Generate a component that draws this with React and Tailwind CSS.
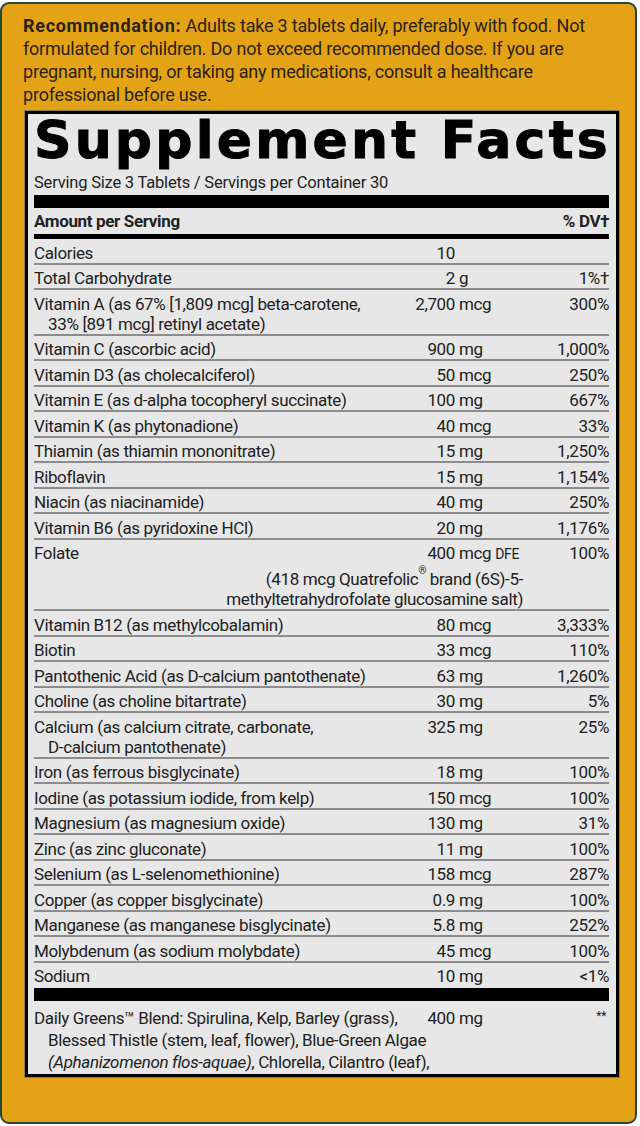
import React from "react";

const rows = [
  { name: ["Calories"], num: "10", unit: "", dv: "" },
  { name: ["Total Carbohydrate"], num: "2", unit: "g", dv: "1%†" },
  { name: ["Vitamin A (as 67% [1,809 mcg] beta-carotene,", "33% [891 mcg] retinyl acetate)"], num: "2,700", unit: "mcg", dv: "300%" },
  { name: ["Vitamin C (ascorbic acid)"], num: "900", unit: "mg", dv: "1,000%" },
  { name: ["Vitamin D3 (as cholecalciferol)"], num: "50", unit: "mcg", dv: "250%" },
  { name: ["Vitamin E (as d-alpha tocopheryl succinate)"], num: "100", unit: "mg", dv: "667%" },
  { name: ["Vitamin K (as phytonadione)"], num: "40", unit: "mcg", dv: "33%" },
  { name: ["Thiamin (as thiamin mononitrate)"], num: "15", unit: "mg", dv: "1,250%" },
  { name: ["Riboflavin"], num: "15", unit: "mg", dv: "1,154%" },
  { name: ["Niacin (as niacinamide)"], num: "40", unit: "mg", dv: "250%" },
  { name: ["Vitamin B6 (as pyridoxine HCl)"], num: "20", unit: "mg", dv: "1,176%" },
  { folate: true },
  { name: ["Vitamin B12 (as methylcobalamin)"], num: "80", unit: "mcg", dv: "3,333%" },
  { name: ["Biotin"], num: "33", unit: "mcg", dv: "110%" },
  { name: ["Pantothenic Acid (as D-calcium pantothenate)"], num: "63", unit: "mg", dv: "1,260%" },
  { name: ["Choline (as choline bitartrate)"], num: "30", unit: "mg", dv: "5%" },
  { name: ["Calcium (as calcium citrate, carbonate,", "D-calcium pantothenate)"], num: "325", unit: "mg", dv: "25%" },
  { name: ["Iron (as ferrous bisglycinate)"], num: "18", unit: "mg", dv: "100%" },
  { name: ["Iodine (as potassium iodide, from kelp)"], num: "150", unit: "mcg", dv: "100%" },
  { name: ["Magnesium (as magnesium oxide)"], num: "130", unit: "mg", dv: "31%" },
  { name: ["Zinc (as zinc gluconate)"], num: "11", unit: "mg", dv: "100%" },
  { name: ["Selenium (as L-selenomethionine)"], num: "158", unit: "mcg", dv: "287%" },
  { name: ["Copper (as copper bisglycinate)"], num: "0.9", unit: "mg", dv: "100%" },
  { name: ["Manganese (as manganese bisglycinate)"], num: "5.8", unit: "mg", dv: "252%" },
  { name: ["Molybdenum (as sodium molybdate)"], num: "45", unit: "mcg", dv: "100%" },
  { name: ["Sodium"], num: "10", unit: "mg", dv: "<1%", last: true },
];

function Row({ r }) {
  if (r.folate) {
    return (
      <div className="pt-[3.5px] border-b-2 border-[#8c8c8c]">
        <div className="grid grid-cols-[361px_60px_84px_1fr] leading-[20px]">
          <div>Folate</div>
          <div className="text-right">400</div>
          <div className="pl-[4px] whitespace-nowrap">
            mcg <span className="text-[14px]">DFE</span>
          </div>
          <div className="text-right">100%</div>
        </div>
        <div className="w-[489px] text-right leading-[20px] mt-[5px]">
          (418 mcg Quatrefolic<sup className="text-[10px] align-[6px] leading-none">®</sup> brand (6S)-5-
          <br />
          methyltetrahydrofolate glucosamine salt)
        </div>
      </div>
    );
  }
  return (
    <div
      className={
        "grid grid-cols-[361px_60px_84px_1fr] leading-[20px] pt-[3.5px] " +
        (r.last ? "" : "border-b-2 border-[#8c8c8c]")
      }
    >
      <div>
        {r.name.map((n, i) => (
          <div key={i} className={i > 0 ? "pl-[14px]" : ""}>
            {n}
          </div>
        ))}
      </div>
      <div className="text-right">{r.num}</div>
      <div className="pl-[4px]">{r.unit}</div>
      <div className="text-right">{r.dv}</div>
    </div>
  );
}

export default function App() {
  return (
    <div className="w-[640px] h-[1126px] bg-white overflow-hidden">
      <div className="mt-[2px] w-[637px] h-[1122px] border-2 border-[#25463a] rounded-[9px] bg-[#e4a216] pl-[21px] pr-[16px] pt-[10px] text-[#2a2316] font-['Roboto',sans-serif]">
        <p className="text-[18px] leading-[23px] tracking-[-0.2px]">
          <b className="font-bold tracking-[0.7px]">Recommendation:</b>{" "}
          Adults take 3 tablets daily, preferably with food. Not formulated for children. Do not exceed recommended dose. If you are pregnant, nursing, or taking any medications, consult a healthcare professional before use.
        </p>
        <div className="mt-[5px] ml-[2px] border-[3px] border-black bg-[#e7e7e7] pl-[6px] pr-[7px] pb-[1px] text-[#222] text-[17px] tracking-[-0.35px] shadow-[0_0_0_1px_#8a7a55]">
          <h1 className="font-['DejaVu_Sans',sans-serif] font-bold text-[52px] leading-[52px] tracking-[3.2px] text-black whitespace-nowrap [-webkit-text-stroke:1px_black]">
            Supplement Facts
          </h1>
          <div className="mt-[7px] leading-[20px] text-[16.5px] tracking-[-0.2px]">
            Serving Size 3 Tablets / Servings per Container 30
          </div>
          <div className="mt-[2px] h-[13px] bg-black" />
          <div className="mt-[3px] flex justify-between leading-[20px] font-bold">
            <span>Amount per Serving</span>
            <span>% DV†</span>
          </div>
          <div className="mt-[3px] h-[5px] bg-black" />
          {rows.map((r, i) => (
            <Row key={i} r={r} />
          ))}
          <div className="mt-[2px] h-[13px] bg-black" />
          <div className="mt-[6px] grid grid-cols-[361px_60px_84px_1fr] leading-[22px]">
            <div className="whitespace-nowrap">
              <div>Daily Greens™ Blend: Spirulina, Kelp, Barley (grass),</div>
              <div className="pl-[14px]">Blessed Thistle (stem, leaf, flower), Blue-Green Algae</div>
              <div className="pl-[14px]">
                <span className="italic">(Aphanizomenon flos-aquae)</span>, Chlorella, Cilantro (leaf),
              </div>
            </div>
            <div className="text-right">400</div>
            <div className="pl-[4px]">mg</div>
            <div className="text-right text-[12px] leading-[18px] pr-[3px]">**</div>
          </div>
        </div>
      </div>
    </div>
  );
}
